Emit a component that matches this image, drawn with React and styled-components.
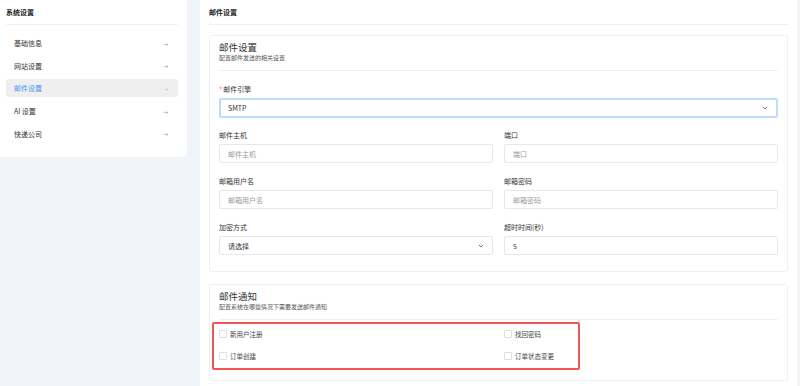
import React from "react";
import styled, { createGlobalStyle } from "styled-components";

const Global = createGlobalStyle`
  body {
    margin: 0;
    background: #f1f5fa;
    font-family: "Noto Sans CJK SC", "Noto Sans", sans-serif;
    color: #333;
  }
`;

const Page = styled.div`
  display: flex;
  align-items: flex-start;
  gap: 13px;
  height: 386px;
  overflow: hidden;
`;

const Sidebar = styled.aside`
  width: 172px;
  flex: none;
  background: #fff;
  border-radius: 0 0 5px 0;
  padding: 0 9px 14px 6px;
`;

const PanelHead = styled.div`
  height: 25px;
  display: flex;
  align-items: center;
  font-size: 7px;
  font-weight: 700;
  color: #222;
  border-bottom: 1px solid #f0f0f0;
  box-sizing: border-box;
`;

const Menu = styled.ul`
  list-style: none;
  margin: 9px 0 0;
  padding: 0;
  display: flex;
  flex-direction: column;
  gap: 4.7px;
`;

const MenuItem = styled.li`
  height: 18px;
  display: flex;
  align-items: center;
  justify-content: space-between;
  padding: 0 10px 0 8px;
  border-radius: 3px;
  font-size: 7px;
  color: ${(p) => (p.$active ? "#4e95f5" : "#333")};
  background: ${(p) => (p.$active ? "#efefef" : "transparent")};
`;

const Arrow = styled.span`
  font-size: 5px;
  color: ${(p) => (p.$active ? "#8fb8f5" : "#666")};
`;

const Main = styled.main`
  flex: 1;
  margin-right: 3px;
  background: #fff;
  padding: 0 9px;
  min-height: 400px;
`;

const Card = styled.section`
  position: relative;
  margin-top: ${(p) => p.$top}px;
  border: 1px solid #f0f0f0;
  border-radius: 3px;
  padding: 5px 9px ${(p) => p.$bottom}px;
`;

const CardTitle = styled.div`
  font-size: 9.5px;
  line-height: 12px;
  color: #333;
`;

const CardSub = styled.div`
  font-size: 6px;
  line-height: 9px;
  color: #555;
`;

const CardRule = styled.div`
  height: 1px;
  background: #f0f0f0;
  margin-top: 8px;
`;

const Field = styled.div`
  display: flex;
  flex-direction: column;
  gap: 4px;
  margin-top: ${(p) => p.$top || 0}px;
`;

const Label = styled.label`
  font-size: 7px;
  line-height: 10px;
  color: #333;
`;

const Star = styled.span`
  color: #f56c6c;
  margin-right: 1px;
`;

const Grid = styled.div`
  display: grid;
  grid-template-columns: 1fr 1fr;
  column-gap: 11px;
  row-gap: 13px;
  margin-top: 12px;
`;

const Box = styled.div`
  height: ${(p) => (p.$focus ? 20 : 19)}px;
  box-sizing: border-box;
  display: flex;
  align-items: center;
  justify-content: space-between;
  padding: 0 8px 0 ${(p) => (p.$focus ? 7 : 8)}px;
  border: ${(p) => (p.$focus ? "2px solid #bcdcfb" : "1px solid #e6e8eb")};
  border-radius: 2px;
  font-size: 7px;
  color: ${(p) => (p.$muted ? "#999" : "#333")};
`;

const Chevron = () => (
  <svg width="6" height="4" viewBox="0 0 6 4">
    <path d="M0.8 0.8l2.2 2.2L5.2 0.8" fill="none" stroke="#666" strokeWidth="0.9" />
  </svg>
);

const Checks = styled.div`
  display: grid;
  grid-template-columns: 1fr 1fr;
  column-gap: 11px;
  margin-top: 3px;
`;

const Check = styled.label`
  height: 22px;
  display: flex;
  align-items: center;
  gap: 3px;
  font-size: 6.5px;
  color: #444;
`;

const Square = styled.span`
  width: 6px;
  height: 6px;
  border: 1px solid #dcdfe6;
  border-radius: 1px;
`;

const Highlight = styled.div`
  position: absolute;
  left: 2px;
  top: 37px;
  width: 364px;
  height: 44px;
  border: 2px solid #f25454;
  border-radius: 2px;
  pointer-events: none;
`;

const menu = ["基础信息", "网站设置", "邮件设置", "AI 设置", "快递公司"];

const fields = [
  { label: "邮件主机", value: "邮件主机", muted: true },
  { label: "端口", value: "端口", muted: true },
  { label: "邮箱用户名", value: "邮箱用户名", muted: true },
  { label: "邮箱密码", value: "邮箱密码", muted: true },
  { label: "加密方式", value: "请选择", select: true },
  { label: "超时时间(秒)", value: "5" },
];

export default function App() {
  return (
    <Page>
      <Global />
      <Sidebar>
        <PanelHead>系统设置</PanelHead>
        <Menu>
          {menu.map((m) => (
            <MenuItem key={m} $active={m === "邮件设置"}>
              {m}
              <Arrow $active={m === "邮件设置"}>→</Arrow>
            </MenuItem>
          ))}
        </Menu>
      </Sidebar>
      <Main>
        <PanelHead>邮件设置</PanelHead>
        <Card $top={10} $bottom={16}>
          <CardTitle>邮件设置</CardTitle>
          <CardSub>配置邮件发送的相关设置</CardSub>
          <CardRule />
          <Field $top={13}>
            <Label>
              <Star>*</Star>邮件引擎
            </Label>
            <Box $focus>
              SMTP
              <Chevron />
            </Box>
          </Field>
          <Grid>
            {fields.map((f) => (
              <Field key={f.label}>
                <Label>{f.label}</Label>
                <Box $muted={f.muted}>
                  {f.value}
                  {f.select && <Chevron />}
                </Box>
              </Field>
            ))}
          </Grid>
        </Card>
        <Card $top={12} $bottom={13}>
          <CardTitle>邮件通知</CardTitle>
          <CardSub>配置系统在哪些情况下需要发送邮件通知</CardSub>
          <CardRule />
          <Checks>
            <Check><Square />新用户注册</Check>
            <Check><Square />找回密码</Check>
            <Check><Square />订单创建</Check>
            <Check><Square />订单状态变更</Check>
          </Checks>
          <Highlight />
        </Card>
      </Main>
    </Page>
  );
}
